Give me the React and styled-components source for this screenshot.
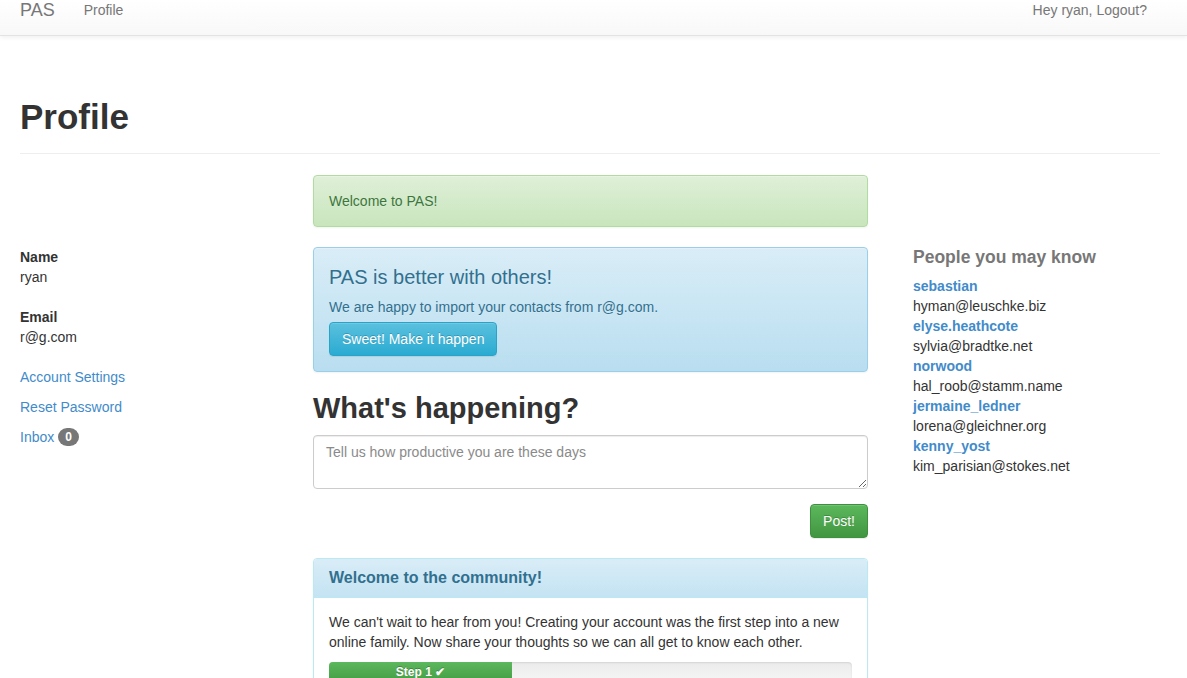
import React from "react";
import styled, { createGlobalStyle } from "styled-components";

const Global = createGlobalStyle`
  * { box-sizing: border-box; }
  html, body { margin: 0; padding: 0; background: #fff; }
  body {
    font-family: "Liberation Sans", Arial, Helvetica, sans-serif;
    font-size: 14px;
    line-height: 20px;
    color: #333;
  }
`;

const Navbar = styled.header`
  height: 36px;
  background: linear-gradient(to bottom, #ffffff 0%, #f8f8f8 100%);
  border-bottom: 1px solid #e3e3e3;
  box-shadow: 0 1px 5px rgba(0, 0, 0, 0.075);
  display: flex;
  align-items: flex-start;
  padding: 0 40px 0 20px;
`;

const Brand = styled.a`
  font-size: 18px;
  line-height: 20px;
  color: #777;
  text-decoration: none;
  margin-right: 29px;
`;

const NavLink = styled.a`
  font-size: 14px;
  line-height: 20px;
  color: #777;
  text-decoration: none;
  margin-left: ${(p) => (p.$right ? "auto" : "0")};
`;

const Main = styled.main`
  width: 1140px;
  margin-left: 20px;
`;

const PageHeader = styled.div`
  margin-top: 61px;
  padding-bottom: 16px;
  border-bottom: 1px solid #eee;
  margin-bottom: 21px;
`;

const Title = styled.h1`
  margin: 0;
  font-size: 35px;
  line-height: 40px;
  font-weight: 700;
  color: #333;
`;

const Grid = styled.div`
  display: grid;
  grid-template-columns: 293px 555px 1fr;
  align-items: start;
`;

const Side = styled.aside`
  padding-top: 72px;
  padding-left: ${(p) => p.$pad || "0"};
`;

const InfoBlock = styled.dl`
  margin: 0 0 20px;
`;

const Term = styled.dt`
  font-weight: 700;
`;

const Desc = styled.dd`
  margin: 0;
`;

const LinkList = styled.ul`
  list-style: none;
  margin: 0;
  padding: 0;
  display: flex;
  flex-direction: column;
  gap: 10px;
`;

const Link = styled.a`
  color: #428bca;
  text-decoration: none;
  font-weight: ${(p) => (p.$bold ? 700 : 400)};
`;

const Badge = styled.span`
  display: inline-block;
  min-width: 10px;
  padding: 3px 7px;
  margin-left: 0;
  font-size: 12px;
  font-weight: 700;
  line-height: 1;
  color: #fff;
  text-align: center;
  vertical-align: 1px;
  background: #777;
  border-radius: 10px;
`;

const Center = styled.section`
  display: flex;
  flex-direction: column;
`;

const Alert = styled.div`
  border: 1px solid ${(p) => (p.$variant === "success" ? "#b2dba1" : "#9acfea")};
  border-radius: 4px;
  padding: 15px;
  margin-bottom: 20px;
  color: ${(p) => (p.$variant === "success" ? "#3c763d" : "#31708f")};
  background: ${(p) =>
    p.$variant === "success"
      ? "linear-gradient(to bottom, #dff0d8 0%, #c8e5bc 100%)"
      : "linear-gradient(to bottom, #d9edf7 0%, #b9def0 100%)"};
  box-shadow: inset 0 1px 0 rgba(255, 255, 255, 0.25), 0 1px 2px rgba(0, 0, 0, 0.05);
  text-shadow: 0 1px 0 rgba(255, 255, 255, 0.2);
`;

const AlertTitle = styled.h3`
  margin: 3px 0 9px;
  font-size: 20px;
  line-height: 22px;
  font-weight: 400;
`;

const AlertText = styled.p`
  margin: 0 0 5px;
`;

const Button = styled.button`
  display: inline-block;
  font-family: inherit;
  font-size: 14px;
  line-height: 20px;
  padding: 6px 12px;
  border-radius: 4px;
  color: #fff;
  cursor: pointer;
  text-shadow: 0 -1px 0 rgba(0, 0, 0, 0.2);
  box-shadow: inset 0 1px 0 rgba(255, 255, 255, 0.15), 0 1px 1px rgba(0, 0, 0, 0.075);
  border: 1px solid ${(p) => (p.$variant === "success" ? "#3e8f3e" : "#28a4c9")};
  background: ${(p) =>
    p.$variant === "success"
      ? "linear-gradient(to bottom, #5cb85c 0%, #419641 100%)"
      : "linear-gradient(to bottom, #5bc0de 0%, #2aabd2 100%)"};
  align-self: ${(p) => (p.$end ? "flex-end" : "flex-start")};
`;

const Heading2 = styled.h2`
  margin: 0 0 11px;
  font-size: 29px;
  line-height: 32px;
  font-weight: 700;
  color: #333;
`;

const TextArea = styled.textarea`
  display: block;
  width: 100%;
  height: 54px;
  padding: 6px 12px;
  font-family: inherit;
  font-size: 14px;
  line-height: 20px;
  color: #555;
  border: 1px solid #ccc;
  border-radius: 4px;
  box-shadow: inset 0 1px 1px rgba(0, 0, 0, 0.075);
  resize: vertical;
  margin: 0 0 15px;
  &::placeholder { color: #8a8a8a; }
`;

const Panel = styled.div`
  margin-top: 20px;
  border: 1px solid #bce8f1;
  border-radius: 4px;
  background: #fff;
  box-shadow: 0 1px 2px rgba(0, 0, 0, 0.05);
`;

const PanelHeading = styled.div`
  padding: 10px 15px;
  border-bottom: 1px solid #bce8f1;
  border-radius: 3px 3px 0 0;
  background: linear-gradient(to bottom, #d9edf7 0%, #c4e3f3 100%);
  color: #31708f;
`;

const PanelTitle = styled.h3`
  margin: 0;
  font-size: 16px;
  line-height: 18px;
  font-weight: 700;
`;

const PanelBody = styled.div`
  padding: 14px 15px 15px;
`;

const Para = styled.p`
  margin: 0 0 10px;
`;

const Progress = styled.div`
  height: 20px;
  border-radius: 4px;
  overflow: hidden;
  background: linear-gradient(to bottom, #ebebeb 0%, #f5f5f5 100%);
  box-shadow: inset 0 1px 2px rgba(0, 0, 0, 0.1);
`;

const ProgressBar = styled.div`
  height: 100%;
  background: linear-gradient(to bottom, #5cb85c 0%, #449d44 100%);
  color: #fff;
  font-size: 12px;
  font-weight: 700;
  line-height: 20px;
  text-align: center;
  text-shadow: 0 -1px 0 rgba(0, 0, 0, 0.25);
`;

const SideHeading = styled.h4`
  margin: 0 0 9px;
  font-size: 17.5px;
  line-height: 20px;
  font-weight: 700;
  color: #777;
`;

const PersonList = styled.ul`
  list-style: none;
  margin: 0;
  padding: 0;
`;

const Person = styled.li`
  display: flex;
  flex-direction: column;
`;

const people = [
  ["sebastian", "hyman@leuschke.biz"],
  ["elyse.heathcote", "sylvia@bradtke.net"],
  ["norwood", "hal_roob@stamm.name"],
  ["jermaine_ledner", "lorena@gleichner.org"],
  ["kenny_yost", "kim_parisian@stokes.net"],
];

export default function App() {
  return (
    <>
      <Global />
      <Navbar>
        <Brand href="#">PAS</Brand>
        <NavLink href="#">Profile</NavLink>
        <NavLink href="#" $right>Hey ryan, Logout?</NavLink>
      </Navbar>
      <Main>
        <PageHeader>
          <Title>Profile</Title>
        </PageHeader>
        <Grid>
          <Side>
            <InfoBlock>
              <Term>Name</Term>
              <Desc>ryan</Desc>
            </InfoBlock>
            <InfoBlock>
              <Term>Email</Term>
              <Desc>r@g.com</Desc>
            </InfoBlock>
            <LinkList>
              <li><Link href="#">Account Settings</Link></li>
              <li><Link href="#">Reset Password</Link></li>
              <li><Link href="#">Inbox</Link> <Badge>0</Badge></li>
            </LinkList>
          </Side>
          <Center>
            <Alert $variant="success">Welcome to PAS!</Alert>
            <Alert $variant="info">
              <AlertTitle>PAS is better with others!</AlertTitle>
              <AlertText>We are happy to import your contacts from r@g.com.</AlertText>
              <Button $variant="info">Sweet! Make it happen</Button>
            </Alert>
            <Heading2>What's happening?</Heading2>
            <TextArea placeholder="Tell us how productive you are these days" />
            <Button $variant="success" $end>Post!</Button>
            <Panel>
              <PanelHeading>
                <PanelTitle>Welcome to the community!</PanelTitle>
              </PanelHeading>
              <PanelBody>
                <Para>
                  We can't wait to hear from you! Creating your account was the first step into a new
                  online family. Now share your thoughts so we can all get to know each other.
                </Para>
                <Progress>
                  <ProgressBar style={{ width: "35%" }}>Step 1 ✔</ProgressBar>
                </Progress>
              </PanelBody>
            </Panel>
          </Center>
          <Side $pad="45px">
            <SideHeading>People you may know</SideHeading>
            <PersonList>
              {people.map(([name, email]) => (
                <Person key={name}>
                  <Link href="#" $bold>{name}</Link>
                  <span>{email}</span>
                </Person>
              ))}
            </PersonList>
          </Side>
        </Grid>
      </Main>
    </>
  );
}
